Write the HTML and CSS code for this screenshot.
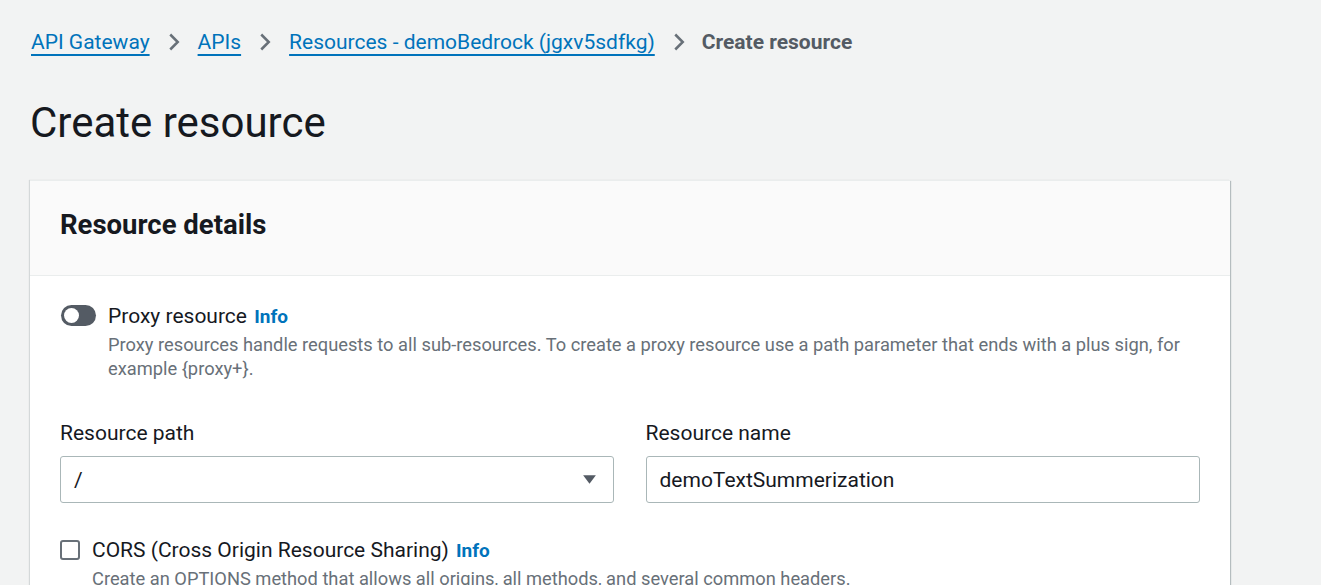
FILE: index.html
```html
<!DOCTYPE html>
<html lang="en">
<head>
<meta charset="utf-8">
<title>Create resource</title>
<link rel="stylesheet" href="styles.css">
</head>
<body>
<div class="page">
  <nav class="breadcrumbs">
    <a class="crumb-link" href="#">API Gateway</a>
    <svg class="chev" viewBox="0 0 16 16" width="20" height="20"><path d="M5 2l6 6-6 6" fill="none" stroke="#687078" stroke-width="2"/></svg>
    <a class="crumb-link" href="#">APIs</a>
    <svg class="chev" viewBox="0 0 16 16" width="20" height="20"><path d="M5 2l6 6-6 6" fill="none" stroke="#687078" stroke-width="2"/></svg>
    <a class="crumb-link" href="#">Resources - demoBedrock (jgxv5sdfkg)</a>
    <svg class="chev" viewBox="0 0 16 16" width="20" height="20"><path d="M5 2l6 6-6 6" fill="none" stroke="#687078" stroke-width="2"/></svg>
    <span class="crumb-current">Create resource</span>
  </nav>
  <h1 class="title">Create resource</h1>
  <section class="container">
    <header class="container-header">
      <h2 class="container-title">Resource details</h2>
    </header>
    <div class="container-body">
      <div class="option">
        <span class="toggle"><span class="knob"></span></span>
        <div class="option-text">
          <div class="option-label">Proxy resource <a class="info" href="#">Info</a></div>
          <div class="option-desc">Proxy resources handle requests to all sub-resources. To create a proxy resource use a path parameter that ends with a plus sign, for example {proxy+}.</div>
        </div>
      </div>
      <div class="fields">
        <div class="field">
          <label class="field-label">Resource path</label>
          <div class="input select">
            <span>/</span>
            <svg class="caret" viewBox="0 0 16 16" width="17" height="17"><path d="M2 4h12L8 12z" fill="#545b64"/></svg>
          </div>
        </div>
        <div class="field">
          <label class="field-label">Resource name</label>
          <div class="input"><span>demoTextSummerization</span></div>
        </div>
      </div>
      <div class="option option-cors">
        <span class="checkbox"></span>
        <div class="option-text">
          <div class="option-label">CORS (Cross Origin Resource Sharing) <a class="info" href="#">Info</a></div>
          <div class="option-desc">Create an OPTIONS method that allows all origins, all methods, and several common headers.</div>
        </div>
      </div>
    </div>
  </section>
</div>
</body>
</html>
```

FILE: styles.css
```css
* { box-sizing: border-box; }
html, body {
  margin: 0;
  background: #f2f3f3;
  font-family: Roboto, "Open Sans", sans-serif;
  color: #16191f;
  overflow: hidden;
}
.page {
  padding: 26px 0 0 30px;
  width: 1230px;
}
.breadcrumbs {
  display: flex;
  align-items: center;
  height: 32px;
  font-size: 21px;
}
.crumb-link {
  color: #0073bb;
  text-decoration: underline;
  text-underline-offset: 5px;
  text-decoration-thickness: 2px;
  padding-left: 1px;
}
.chev {
  margin: 0 13px 0 14px;
}
.crumb-current {
  color: #545b64;
  font-weight: 700;
}
.title {
  margin: 40px 0 0 0;
  font-size: 42px;
  font-weight: 400;
  line-height: 50px;
  color: #16191f;
}
.container {
  margin-top: 32px;
  background: #fff;
  border-top: 1px solid #eaeded;
  box-shadow: 1px 1px 1px 0 rgba(0,28,36,0.25), -1px 0 1px 0 rgba(0,28,36,0.12);
}
.container-header {
  background: #fafafa;
  border-bottom: 1px solid #eaeded;
  height: 95px;
  padding: 0 30px 8px 30px;
  display: flex;
  align-items: center;
}
.container-title {
  margin: 0;
  font-size: 27.5px;
  font-weight: 700;
  color: #16191f;
}
.container-body {
  padding: 28px 30px 0 30px;
}
.option {
  display: flex;
  align-items: flex-start;
}
.toggle {
  flex: none;
  width: 35px;
  height: 21px;
  border-radius: 11px;
  background: #545b64;
  margin: 1px 12px 0 1px;
  position: relative;
}
.knob {
  position: absolute;
  left: 3px;
  top: 3px;
  width: 15px;
  height: 15px;
  border-radius: 50%;
  background: #fff;
}
.option-label {
  font-size: 21px;
  line-height: 24px;
  color: #16191f;
}
.info {
  color: #0073bb;
  font-weight: 700;
  font-size: 19px;
  text-decoration: none;
  margin-left: 2px;
}
.option-desc {
  margin-top: 4px;
  font-size: 18.3px;
  line-height: 24px;
  color: #687078;
}
.fields {
  display: grid;
  grid-template-columns: 1fr 1fr;
  column-gap: 31px;
  margin-top: 40px;
}
.field-label {
  display: block;
  font-size: 21px;
  line-height: 24px;
  color: #16191f;
}
.input {
  margin-top: 11px;
  height: 47px;
  border: 1px solid #aab7b8;
  border-radius: 3px;
  background: #fff;
  display: flex;
  align-items: center;
  padding: 0 15px 0 13px;
  font-size: 21px;
  color: #16191f;
}
.select {
  justify-content: space-between;
  margin-right: 1px;
}
.input span { line-height: 24px; }
.option-cors {
  margin-top: 35px;
}
.checkbox {
  flex: none;
  width: 20px;
  height: 20px;
  border: 2px solid #687078;
  border-radius: 3px;
  background: #fff;
  margin: 2px 12px 0 0;
}
```
